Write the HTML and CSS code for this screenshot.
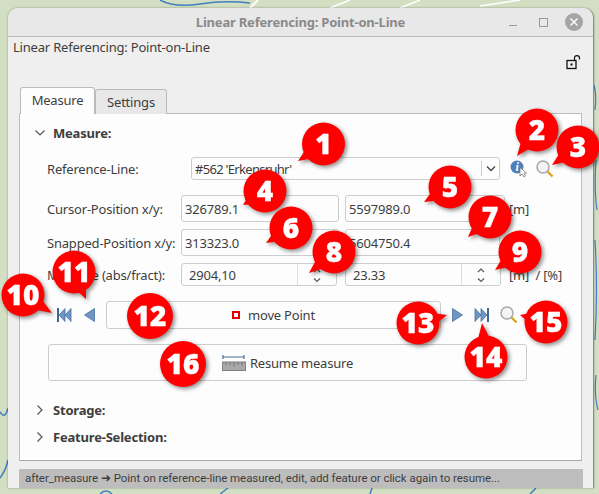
FILE: index.html
```html
<!DOCTYPE html>
<html>

  <head>
    <title>Linear Referencing: Point-on-Line</title>
    <link rel="stylesheet" href="styles.css">
  </head>

  <body>
    <svg class="map" width="599" height="494" viewBox="0 0 599 494">
      <path d="M160 0 Q175 8 200 4 T250 3" fill="none" stroke="#3f7fc0" stroke-width="1.5" />
      <path d="M258 0 L250 8" fill="none" stroke="#ffffff" stroke-width="2" />
      <path d="M330 8 L350 0 M400 8 L420 0 M480 6 L520 0" fill="none" stroke="#ffffff" stroke-width="1.5" />
      <path d="M594 85 Q597 95 595 110 M596 160 Q594 190 597 210 M595 240 Q598 290 595 340 M596 375 Q594 395 598 410" fill="none" stroke="#3f7fc0" stroke-width="1.2" />
      <path d="M0 412 Q5 420 8 408 M0 478 Q6 470 8 460" fill="none" stroke="#3f7fc0" stroke-width="1.5" />
      <path d="M100 494 Q106 488 112 494 M220 494 L228 488 M370 494 L372 488 M530 494 L536 488" fill="none" stroke="#3f7fc0" stroke-width="1.5" />
    </svg>

    <div class="window">
      <div class="titlebar">
        <span class="title">Linear Referencing: Point-on-Line</span>
        <div class="window-buttons">
          <span class="win-min"></span>
          <span class="win-max"></span>
          <span class="win-close">
            <svg width="10" height="10" viewBox="0 0 10 10"><path d="M1.5 1.5 L8.5 8.5 M8.5 1.5 L1.5 8.5" stroke="#fff" stroke-width="1.4" /></svg>
          </span>
        </div>
      </div>

      <div class="dialog">
        <div class="dialog-title">Linear Referencing: Point-on-Line</div>
        <div class="lock-row">
          <svg width="15" height="15" viewBox="0 0 15 15">
            <rect x="1" y="5.5" width="9" height="8" fill="none" stroke="#111" stroke-width="1.3" />
            <rect x="4.5" y="8.5" width="2" height="2" fill="#111" />
            <path d="M8.5 5 V3 Q8.5 0.7 11 0.7 Q13.5 0.7 13.5 3 V4.5" fill="none" stroke="#111" stroke-width="1.2" />
          </svg>
        </div>

        <div class="tabs">
          <div class="tab tab-active">Measure</div>
          <div class="tab">Settings</div>
        </div>

        <div class="pane">
          <div class="section-head">
            <svg class="arrow" width="12" height="12" viewBox="0 0 12 12"><path d="M1.5 3.5 L6 8 L10.500 3.500" fill="none" stroke="#555" stroke-width="1.2" /></svg>
            <b>Measure:</b>
          </div>

          <div class="row row-ref">
            <label class="label label-ref">Reference-Line:</label>
            <div class="field combo">
              <span class="combo-text">#562 'Erkensruhr'</span>
              <span class="combo-btn">
                <svg width="10" height="8" viewBox="0 0 10 8"><path d="M1 1.500 L5 5.500 L9 1.500" fill="none" stroke="#444" stroke-width="1.300" /></svg>
              </span>
            </div>
            <svg class="icon-info" width="20" height="20" viewBox="0 0 20 20">
              <circle cx="8" cy="8" r="6.500" fill="#4f7fb8" />
              <text x="8" y="12" class="info-i">i</text>
              <path d="M11 8.500 L11 17 L13 15 L15 18 L16.500 17 L15 14.500 L17.500 14 Z" fill="#fff" stroke="#777" stroke-width="0.800" />
            </svg>
            <svg class="icon-zoom" width="20" height="20" viewBox="0 0 20 20">
              <use href="#lens" />
            </svg>
          </div>

          <div class="row row-cursor">
            <label class="label">Cursor-Position x/y:</label>
            <div class="field field-a">326789.1</div>
            <div class="field field-b">5597989.0</div>
            <span class="unit unit-cursor">[m]</span>
          </div>

          <div class="row row-snap">
            <label class="label">Snapped-Position x/y:</label>
            <div class="field field-a">313323.0</div>
            <div class="field field-b2">5604750.4</div>
          </div>

          <div class="row row-measure">
            <label class="label">Measure (abs/fract):</label>
            <div class="field spin field-s1">
              <span class="spin-text">2904,10</span>
              <span class="spin-btn">
                <svg width="10" height="20" viewBox="0 0 10 20"><path d="M2 7 L5 4 L8 7 M2 13.500 L5 16.500 L8 13.500" fill="none" stroke="#555" stroke-width="1.100" /></svg>
              </span>
            </div>
            <div class="field spin field-s2">
              <span class="spin-text">23.33</span>
              <span class="spin-btn">
                <svg width="10" height="20" viewBox="0 0 10 20"><path d="M2 7 L5 4 L8 7 M2 13.500 L5 16.500 L8 13.500" fill="none" stroke="#555" stroke-width="1.100" /></svg>
              </span>
            </div>
            <span class="unit">[m]&nbsp; / [%]</span>
          </div>

          <div class="nav-row">
            <svg class="nav-first" width="16" height="16" viewBox="0 0 16 16">
              <path d="M3 8 L9 1.500 V14.500 Z M9 8 L15 1.500 V14.500 Z" fill="#6f97c4" stroke="#4a6f9c" stroke-width="0.800" />
              <rect x="1" y="1" width="2" height="14" fill="#3f6694" />
            </svg>
            <svg class="nav-prev" width="13" height="16" viewBox="0 0 13 16">
              <path d="M1.500 8 L11.500 1.500 V14.500 Z" fill="#6f97c4" stroke="#4a6f9c" stroke-width="0.800" />
            </svg>
            <div class="button move-btn"><span class="point-mark"></span>move Point</div>
            <svg class="nav-next" width="13" height="16" viewBox="0 0 13 16">
              <path d="M11.500 8 L1.500 1.500 V14.500 Z" fill="#6f97c4" stroke="#4a6f9c" stroke-width="0.800" />
            </svg>
            <svg class="nav-last" width="16" height="16" viewBox="0 0 16 16">
              <path d="M13 8 L7 1.500 V14.500 Z M7 8 L1 1.500 V14.500 Z" fill="#6f97c4" stroke="#4a6f9c" stroke-width="0.800" />
              <rect x="13" y="1" width="2" height="14" fill="#3f6694" />
            </svg>
            <svg class="nav-zoom" width="20" height="20" viewBox="0 0 20 20">
              <defs>
                <g id="lens">
                  <circle cx="8" cy="8" r="6" fill="#f4f4f4" stroke="#a8a8a8" stroke-width="1.500" />
                  <path d="M12.500 12.500 L17.500 17.500" stroke="#d9a520" stroke-width="2.400" />
                </g>
              </defs>
              <use href="#lens" />
            </svg>
          </div>

          <div class="button resume-btn">
            <svg width="24" height="16" viewBox="0 0 24 16">
              <path d="M1 2 H22 M1 0 V4 M22 0 V4" fill="none" stroke="#4a6f9c" stroke-width="1.200" />
              <rect x="0.500" y="7" width="23" height="8.500" fill="#a8a8a8" stroke="#808080" />
              <path d="M4 7 V10.500 M8 7 V10 M12 7 V11.500 M16 7 V10 M20 7 V10.500" stroke="#666" stroke-width="0.800" />
            </svg>
            Resume measure
          </div>

          <div class="section-head head-storage">
            <svg class="arrow" width="12" height="12" viewBox="0 0 12 12"><path d="M3.500 1.500 L8 6 L3.500 10.500" fill="none" stroke="#555" stroke-width="1.200" /></svg>
            <b>Storage:</b>
          </div>
          <div class="section-head head-feature">
            <svg class="arrow" width="12" height="12" viewBox="0 0 12 12"><path d="M3.500 1.500 L8 6 L3.500 10.500" fill="none" stroke="#555" stroke-width="1.200" /></svg>
            <b>Feature-Selection:</b>
          </div>
        </div>

        <div class="statusbar">after_measure ➜ Point on reference-line measured, edit, add feature or click again to resume...</div>
      </div>
    </div>

    <!-- numbered callouts drawn over the dialog -->
    <svg class="pins" width="599" height="494" viewBox="0 0 599 494">
      <g transform="translate(323.500 144)"><polygon points="-7.200,-10.800 -25.500,17 7.200,10.800" /><circle r="21.500" /><text y="10">1</text></g>
      <g transform="translate(537 130)"><polygon points="-10.300,-7.900 -20,26 10.300,7.900" /><circle r="21.500" /><text y="10">2</text></g>
      <g transform="translate(578 147)"><polygon points="-7.400,-10.700 -26,18 7.400,10.700" /><circle r="21.500" /><text y="10">3</text></g>
      <g transform="translate(265 191)"><polygon points="-7,-11 -22,14 7,11" /><circle r="21.500" /><text y="10">4</text></g>
      <g transform="translate(450 187)"><polygon points="-6.500,-11.300 -26,15 6.500,11.300" /><circle r="21.500" /><text y="10">5</text></g>
      <g transform="translate(291 228)"><polygon points="-6.700,-11.100 -25,15 6.700,11.100" /><circle r="21.500" /><text y="10">6</text></g>
      <g transform="translate(490 217)"><polygon points="-8.800,-9.600 -22,20 8.800,9.600" /><circle r="21.500" /><text y="10">7</text></g>
      <g transform="translate(334 252)"><polygon points="-8.400,-10 -25,21 8.400,10" /><circle r="21.500" /><text y="10">8</text></g>
      <g transform="translate(520 252)"><polygon points="-7.600,-10.500 -25,18 7.600,10.500" /><circle r="21.500" /><text y="10">9</text></g>
      <g transform="translate(23 295)"><polygon points="-6.900,11.100 29,18 6.900,-11.100" /><circle r="21.500" /><text y="10">10</text></g>
      <g transform="translate(74 272)"><polygon points="-11.900,5.300 12,27 11.900,-5.300" /><circle r="21.500" /><text y="10">11</text></g>
      <g transform="translate(150 316)"><circle r="23" /><text y="10">12</text></g>
      <g transform="translate(418 323)"><polygon points="3.500,12.600 29,-8 -3.500,-12.600" /><circle r="21.500" /><text y="10">13</text></g>
      <g transform="translate(486 357)"><polygon points="12.900,-1.500 -4,-34 -12.900,1.500" /><circle r="21.500" /><text y="10">14</text></g>
      <g transform="translate(546 322)"><polygon points="3.400,-12.500 -26,-7 -3.400,12.500" /><circle r="21.500" /><text y="10">15</text></g>
      <g transform="translate(183 364)"><circle r="23" /><text y="10">16</text></g>
    </svg>
  </body>

</html>
```

FILE: styles.css
```css
html,
body {
  margin: 0;
  height: 494px;
  overflow: hidden;
}

body {
  background-color: #d3dfc2;
  font-family: "Noto Sans", sans-serif;
  font-size: 13px;
  letter-spacing: -0.2px;
  color: #3d3d3d;
}

.map {
  position: absolute;
  left: 0;
  top: 0;
}

.pins {
  position: absolute;
  left: 0;
  top: 0;
}

.pins g {
  filter: drop-shadow(2px 2px 2px rgba(0, 0, 0, 0.45));
}

.pins circle,
.pins polygon {
  fill: #fe0000;
}

.pins text {
  fill: #fff;
  stroke: #fff;
  stroke-width: 0.4px;
  font-family: "Open Sans", sans-serif;
  font-size: 28px;
  font-weight: 800;
  letter-spacing: 0;
  text-anchor: middle;
}

.window {
  position: relative;
  box-sizing: border-box;
  width: 586px;
  height: 480px;
  margin: 8px 0 0 8px;
  display: flex;
  flex-direction: column;
  background-color: #efefef;
  border-radius: 10px 10px 0 0;
  border-right: 1px solid #8c8c8c;
  box-shadow: 0 0 2px rgba(0, 0, 0, 0.4);
}

.titlebar {
  position: relative;
  height: 28px;
  flex: none;
  display: flex;
  align-items: center;
  justify-content: center;
  background-color: #e8e8e8;
  border-bottom: 1px solid #bcbcbc;
  border-radius: 10px 10px 0 0;
}

.title {
  font-weight: 700;
  color: #8a8a8a;
}

.window-buttons {
  position: absolute;
  right: 10px;
  top: 5px;
  display: flex;
  align-items: center;
  gap: 22px;
}

.win-min {
  width: 8px;
  height: 1px;
  margin-top: 7px;
  background-color: #9a9a9a;
}

.win-max {
  width: 7px;
  height: 7px;
  border: 1px solid #9a9a9a;
}

.win-close {
  width: 18px;
  height: 18px;
  margin-left: -5px;
  display: flex;
  align-items: center;
  justify-content: center;
  border-radius: 50%;
  background-color: #a5a5a5;
}

.dialog {
  flex: 1;
  padding: 3px 11px 0 11px;
  display: flex;
  flex-direction: column;
}

.dialog-title {
  margin-left: -6px;
  height: 15px;
  line-height: 14px;
}

.lock-row {
  height: 15px;
  display: flex;
  justify-content: flex-end;
  padding-right: 1px;
}

.tabs {
  display: flex;
  align-items: flex-end;
  height: 27px;
  margin-top: 17px;
  margin-left: 1px;
  position: relative;
  z-index: 1;
  margin-bottom: -1px;
}

.tab {
  box-sizing: border-box;
  width: 72px;
  height: 25px;
  line-height: 24px;
  text-align: center;
  background-color: #e8e8e8;
  border: 1px solid #bcbcbc;
  border-bottom: none;
  border-radius: 3px 3px 0 0;
}

.tab-active {
  width: 75px;
  height: 27px;
  background-color: #fdfdfd;
}

.pane {
  box-sizing: border-box;
  height: 348px;
  background-color: #fdfdfd;
  border: 1px solid #bcbcbc;
  border-bottom-color: #a8a8a8;
  display: flex;
  flex-direction: column;
}

.section-head {
  display: flex;
  align-items: center;
  height: 16px;
  padding-left: 14px;
  margin-top: 11px;
}

.section-head b {
  margin-left: 7px;
  color: #3d3d3d;
}

.head-storage {
  margin-top: 21px;
}

.head-feature {
  margin-top: 11px;
}

.row {
  display: flex;
  align-items: center;
  padding-left: 27px;
}

.row-ref {
  margin-top: 16px;
  height: 23px;
}

.row-cursor {
  margin-top: 15px;
  height: 27px;
}

.row-snap {
  margin-top: 7px;
  height: 27px;
}

.row-measure {
  margin-top: 7px;
  height: 23px;
}

.label {
  width: 134px;
  flex: none;
}

.label-ref {
  width: 144px;
}

.field {
  box-sizing: border-box;
  height: 100%;
  display: flex;
  align-items: center;
  padding-left: 3px;
  background-color: #fdfdfd;
  border: 1px solid #cdcdcd;
  border-radius: 3px;
}

.field-a {
  width: 158px;
}

.field-b {
  width: 160px;
  margin-left: 6px;
}

.field-b2 {
  width: 155px;
  margin-left: 6px;
}

.combo {
  width: 309px;
  padding-left: 3px;
  justify-content: space-between;
}

.combo-text {
  letter-spacing: -0.7px;
}

.combo-btn {
  width: 17px;
  height: 15px;
  display: flex;
  align-items: center;
  justify-content: center;
  border-left: 1px solid #cdcdcd;
}

.icon-info {
  margin-left: 9px;
}

.icon-zoom {
  margin-left: 6px;
}

.spin {
  padding-left: 7px;
  justify-content: space-between;
}

.field-s1 {
  width: 156px;
}

.field-s2 {
  width: 156px;
  margin-left: 8px;
}

.spin-btn {
  width: 38px;
  height: 100%;
  display: flex;
  align-items: center;
  justify-content: center;
  border-left: 1px solid #dedede;
}

.unit {
  margin-left: 8px;
  white-space: nowrap;
}

.unit-cursor {
  margin-left: 4px;
}

.nav-row {
  display: flex;
  align-items: center;
  height: 28px;
  margin-top: 15px;
  margin-left: 36px;
}

.nav-prev {
  margin-left: 11px;
}

.button {
  box-sizing: border-box;
  display: flex;
  align-items: center;
  justify-content: center;
  background-color: #fdfdfd;
  border: 1px solid #cdcdcd;
  border-radius: 3px;
}

.move-btn {
  width: 335px;
  height: 100%;
  margin-left: 10px;
  margin-right: 10px;
}

.point-mark {
  box-sizing: border-box;
  width: 8px;
  height: 8px;
  margin-right: 8px;
  background-color: #fff;
  border: 2px solid #e60000;
}

.nav-last {
  margin-left: 10px;
}

.nav-zoom {
  margin-left: 9px;
}

.resume-btn {
  width: 479px;
  height: 37px;
  margin-top: 15px;
  margin-left: 28px;
  gap: 4px;
}

.info-i {
  fill: #fff;
  font-family: "Liberation Serif", serif;
  font-size: 12px;
  font-weight: 700;
  font-style: italic;
  text-anchor: middle;
}

.statusbar {
  box-sizing: border-box;
  height: 19px;
  margin-top: 8px;
  margin-right: -1px;
  padding-left: 6px;
  line-height: 18px;
  font-family: "Roboto", sans-serif;
  font-size: 11.5px;
  letter-spacing: -0.05px;
  background-color: #bdbdbd;
  white-space: nowrap;
}
```
